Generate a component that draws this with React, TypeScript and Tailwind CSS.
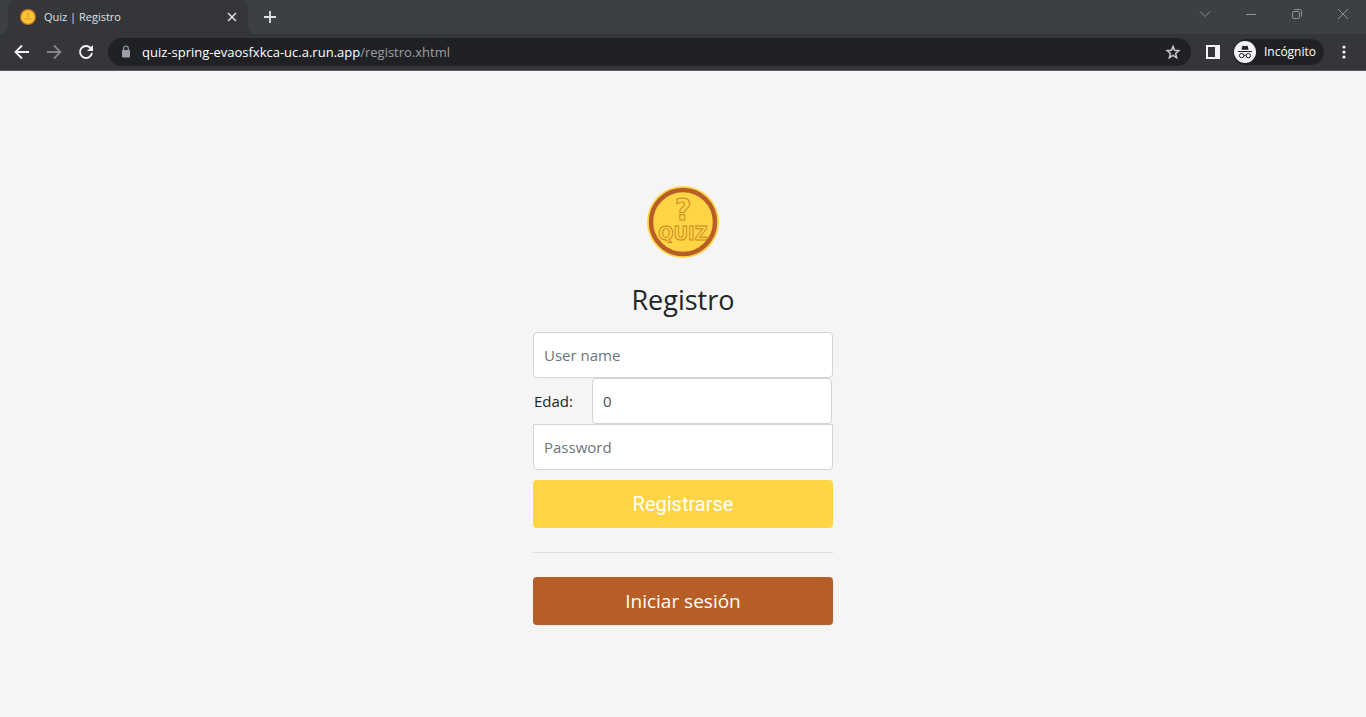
import type { ReactNode } from "react";

const uiFont = "font-['Segoe_UI','Open_Sans','Noto_Sans',sans-serif]";

function QuizLogo({ className }: { className: string }) {
  return (
    <svg viewBox="0 0 72 72" className={className} role="img" aria-label="Quiz">
      <circle cx="36" cy="36" r="36" fill="#ffd445" />
      <circle cx="36" cy="36" r="32" fill="#ffd445" stroke="#b65e26" strokeWidth="4.4" />
      <g
        fill="none"
        stroke="#c98520"
        strokeWidth="0.9"
        textAnchor="middle"
        fontFamily="'DejaVu Sans Condensed', 'DejaVu Sans', sans-serif"
        fontWeight="bold"
      >
        <text x="36" y="34" fontSize="31">?</text>
        <text x="36" y="54" fontSize="20">QUIZ</text>
      </g>
    </svg>
  );
}

function CoinIcon() {
  return (
    <svg viewBox="0 0 16 16" className="size-4 shrink-0" aria-hidden="true">
      <circle cx="8" cy="8" r="8" fill="#c4731f" />
      <circle cx="8" cy="8" r="6.8" fill="#fbc634" />
      <path d="M6.5 4.7h3M8 4.7v4M4.5 10h7" stroke="#d8982a" strokeWidth="1" fill="none" />
    </svg>
  );
}

function IconButton({ label, className, children }: { label: string; className: string; children: ReactNode }) {
  return (
    <button type="button" aria-label={label} className={`flex shrink-0 items-center justify-center ${className}`}>
      {children}
    </button>
  );
}

function TabStrip() {
  return (
    <div className="flex h-[34px] bg-[#3c4043]">
      <div className="w-2 bg-[#35363a]">
        <div className="h-full rounded-br-lg bg-[#3c4043]" />
      </div>
      <div className="flex w-60 items-center rounded-t-lg bg-[#35363a] pr-2 pl-3">
        <CoinIcon />
        <span className="ml-2 flex-1 text-[11px] leading-4 text-[#dfe1e5]">Quiz | Registro</span>
        <IconButton label="Cerrar pestaña" className="size-4 text-[#dfe1e5]">
          <svg viewBox="0 0 16 16" className="size-4" stroke="currentColor" strokeWidth="1.5">
            <path d="M4 4l8 8M12 4l-8 8" />
          </svg>
        </IconButton>
      </div>
      <div className="w-2 bg-[#35363a]">
        <div className="h-full rounded-bl-lg bg-[#3c4043]" />
      </div>
      <IconButton label="Nueva pestaña" className="w-7 text-[#dfe1e5]">
        <svg viewBox="0 0 16 16" className="size-4" stroke="currentColor" strokeWidth="1.8">
          <path d="M8 2v12M2 8h12" />
        </svg>
      </IconButton>
      <div className="ml-auto flex h-7 text-[#8d9194]">
        <IconButton label="Buscar pestañas" className="w-[46px]">
          <svg viewBox="0 0 16 16" className="size-4" fill="none" stroke="currentColor">
            <path d="M3 5.5l5 5 5-5" />
          </svg>
        </IconButton>
        <IconButton label="Minimizar" className="w-[46px]">
          <svg viewBox="0 0 16 16" className="size-4" stroke="currentColor">
            <path d="M3 8.5h10" />
          </svg>
        </IconButton>
        <IconButton label="Restaurar" className="w-[46px]">
          <svg viewBox="0 0 16 16" className="size-4" fill="none" stroke="currentColor">
            <rect x="3.5" y="5.5" width="7" height="7" rx="1.5" />
            <path d="M5.5 3.5h5a2 2 0 0 1 2 2v5" />
          </svg>
        </IconButton>
        <IconButton label="Cerrar" className="w-[46px]">
          <svg viewBox="0 0 16 16" className="size-4" stroke="currentColor">
            <path d="M3 3l10 10M13 3L3 13" />
          </svg>
        </IconButton>
      </div>
    </div>
  );
}

function Toolbar() {
  return (
    <div className="flex h-9 items-center bg-[#35363a] px-[14px]">
      <IconButton label="Atrás" className="size-4 text-[#f1f3f4]">
        <svg viewBox="0 0 16 16" className="size-4" fill="none" stroke="currentColor" strokeWidth="1.8">
          <path d="M15 8H2M8 1.5L1.5 8 8 14.5" />
        </svg>
      </IconButton>
      <IconButton label="Adelante" className="ml-4 size-4 text-[#85868a]">
        <svg viewBox="0 0 16 16" className="size-4" fill="none" stroke="currentColor" strokeWidth="1.8">
          <path d="M1 8h13M8 1.5L14.5 8 8 14.5" />
        </svg>
      </IconButton>
      <IconButton label="Recargar" className="ml-4 size-4 text-[#f1f3f4]">
        <svg viewBox="0 0 16 16" className="size-4" fill="none" stroke="currentColor" strokeWidth="1.9">
          <path d="M13.2 4.8A6 6 0 1 0 14 9" />
          <path d="M15 1v6H9z" fill="currentColor" stroke="none" />
        </svg>
      </IconButton>
      <div className="ml-[14px] flex h-7 flex-1 items-center rounded-full bg-[#202124] px-[10px]">
        <svg viewBox="0 0 16 16" className="size-4 shrink-0" aria-hidden="true">
          <rect x="4" y="6" width="8" height="7.5" rx="0.8" fill="#9aa0a6" />
          <path d="M5.7 6V4.3a2.3 2.3 0 0 1 4.6 0V6" fill="none" stroke="#9aa0a6" strokeWidth="1.2" />
        </svg>
        <span className="ml-2 flex-1 text-[13px] leading-4 text-[#9aa0a6]">
          <span className="text-white">quiz-spring-evaosfxkca-uc.a.run.app</span>/registro.xhtml
        </span>
        <IconButton label="Añadir a marcadores" className="size-4 text-[#c8cacd]">
          <svg viewBox="0 0 16 16" className="size-4" fill="none" stroke="currentColor" strokeWidth="1.5">
            <path d="M8 2.4l1.6 3.9 4.2.4-3.2 2.8 1 4.1L8 11.4l-3.6 2.2 1-4.1-3.2-2.8 4.2-.4z" />
          </svg>
        </IconButton>
      </div>
      <IconButton label="Panel lateral" className="ml-[14px] size-4 text-[#f1f3f4]">
        <svg viewBox="0 0 16 16" className="size-4">
          <path fillRule="evenodd" fill="currentColor" d="M1 1h14v14H1zM3 3v10h7V3z" />
        </svg>
      </IconButton>
      <button
        type="button"
        className="ml-3 flex h-[26px] items-center rounded-full bg-[#202124] pr-2 pl-px text-[12px] leading-4 text-white"
      >
        <svg viewBox="0 0 22 22" className="size-[22px] shrink-0" aria-hidden="true">
          <circle cx="11" cy="11" r="11" fill="#f1f3f4" />
          <path d="M7.4 8.8l.9-3.6c.1-.5.6-.6 1-.4l1.7.4 1.7-.4c.4-.2.9-.1 1 .4l.9 3.6z" fill="#202124" />
          <path d="M4 10.5h14" stroke="#202124" strokeWidth="1" />
          <g fill="none" stroke="#202124" strokeWidth="1">
            <circle cx="7.6" cy="14.6" r="2.2" />
            <circle cx="14.4" cy="14.6" r="2.2" />
            <path d="M9.8 14.4q1.2-.8 2.4 0" />
          </g>
        </svg>
        <span className="ml-2">Incógnito</span>
      </button>
      <IconButton label="Menú" className="ml-3 size-4 text-[#f1f3f4]">
        <svg viewBox="0 0 16 16" className="size-4" fill="currentColor">
          <circle cx="8" cy="3" r="1.6" />
          <circle cx="8" cy="8" r="1.6" />
          <circle cx="8" cy="13" r="1.6" />
        </svg>
      </IconButton>
    </div>
  );
}

const fieldClass =
  "block h-[46px] w-full border border-[#ced4da] bg-white px-[10px] text-[15px] leading-6 text-[#495057] outline-none placeholder:text-[#6c757d]";

export default function App() {
  return (
    <div className={`flex min-h-screen flex-col bg-[#f5f5f5] ${uiFont}`}>
      <header className="border-b border-[#5b5c60]">
        <TabStrip />
        <Toolbar />
      </header>
      <main className="flex flex-1 items-center justify-center pt-[23px]">
        <form className="flex w-[300px] flex-col text-[#212529]" onSubmit={(e) => e.preventDefault()}>
          <QuizLogo className="size-[72px] self-center" />
          <h1 className="mt-6 mb-[14px] text-center text-[27px] leading-9 font-normal">Registro</h1>
          <input aria-label="User name" type="text" placeholder="User name" className={`${fieldClass} rounded`} />
          <div className="flex items-center pr-px">
            <label htmlFor="edad" className="w-[59px] shrink-0 pl-px text-[15px] leading-6">
              Edad:
            </label>
            <input id="edad" type="text" inputMode="numeric" defaultValue="0" className={`${fieldClass} rounded`} />
          </div>
          <input aria-label="Password" type="password" placeholder="Password" className={`${fieldClass} rounded-b`} />
          <button
            type="submit"
            className="mt-[10px] h-12 rounded bg-[#ffd445] font-['Roboto',sans-serif] text-[20px] leading-[30px] text-white"
          >
            Registrarse
          </button>
          <hr className="my-6 border-t border-[#dcdcdc]" />
          <a
            href="#login"
            className="flex h-12 items-center justify-center rounded bg-[#b65e26] text-[19px] leading-[30px] text-white"
          >
            Iniciar sesión
          </a>
        </form>
      </main>
    </div>
  );
}
